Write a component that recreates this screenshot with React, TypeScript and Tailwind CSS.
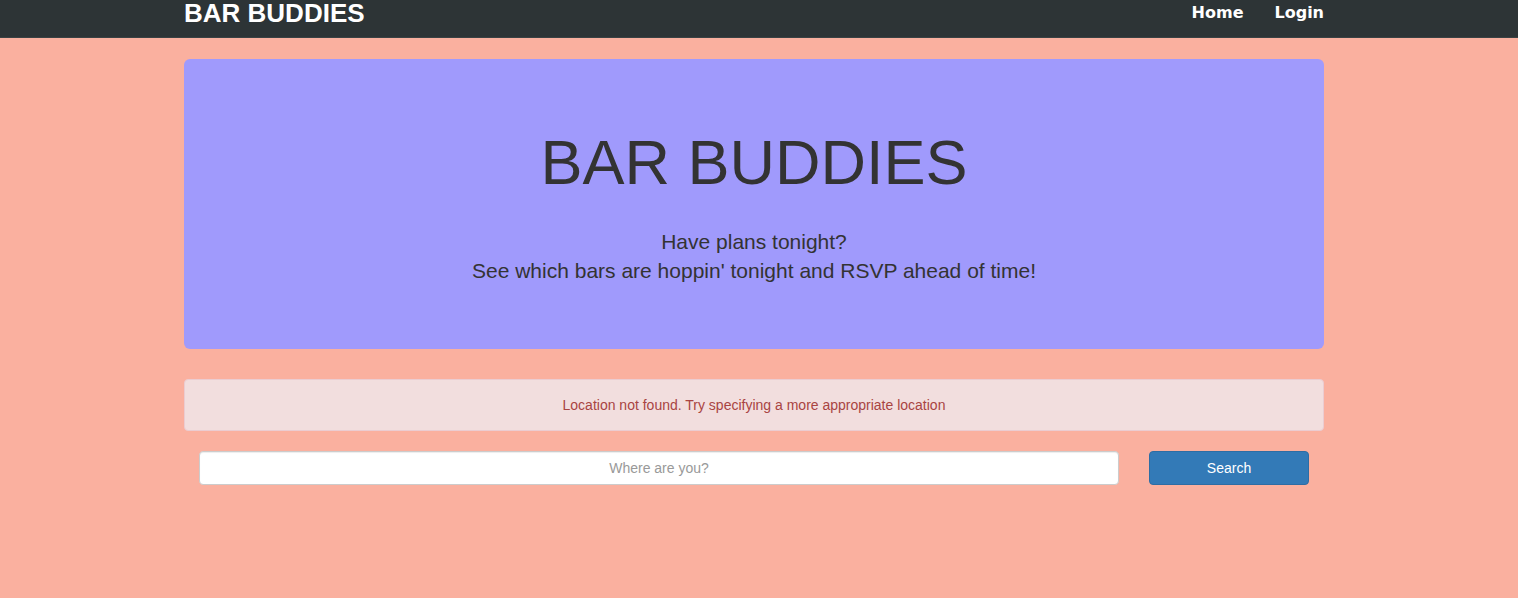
export default function App() {
    return (
        <div className="min-h-[598px] bg-[#fab09f] font-['Liberation_Sans',Arial,sans-serif] text-[14px] text-[#333]">
            {/* Navbar */}
            <nav className="h-[38px] bg-[#2d3436] border-b border-[#3a4244] pr-[10px]">
                <div className="w-[1140px] mx-auto flex items-center justify-between h-full">
                    <span className="text-[26px] font-bold text-white leading-none -mt-[12px]">BAR BUDDIES</span>
                    <div className="flex gap-[31px] -mt-[12px] font-['DejaVu_Sans',sans-serif] font-bold text-[16px] text-white">
                        <span>Home</span>
                        <span>Login</span>
                    </div>
                </div>
            </nav>

            <div className="pr-[10px]">
                <div className="w-[1140px] mx-auto pt-[21px]">
                    {/* Jumbotron */}
                    <div className="bg-[#a09afc] rounded-[6px] pt-12 pb-[49px] text-center">
                        <h1 className="mt-[21px] text-[63px] leading-[1.1] text-[#333]">BAR BUDDIES</h1>
                        <p className="mt-[30px] mb-[15px] text-[21px] leading-[29px] text-[#333]">
                            Have plans tonight?<br />
                            See which bars are hoppin' tonight and RSVP ahead of time!
                        </p>
                    </div>

                    {/* Alert */}
                    <div className="mt-[30px] bg-[#f2dede] border border-[#ebccd1] rounded-[4px] p-[15px] text-center text-[#a94442] leading-[20px]">
                        Location not found. Try specifying a more appropriate location
                    </div>

                    {/* Search form */}
                    <div className="mt-[20px] px-[15px] flex gap-[30px]">
                        <input
                            placeholder="Where are you?"
                            className="flex-1 h-[34px] bg-white border border-[#ccc] rounded-[4px] px-3 text-center text-[14px] placeholder:text-[#999] shadow-[inset_0_1px_1px_rgba(0,0,0,0.075)] outline-none"
                        />
                        <button className="w-[160px] h-[34px] bg-[#337ab7] border border-[#2e6da4] rounded-[4px] text-white text-[14px]">
                            Search
                        </button>
                    </div>
                </div>
            </div>
        </div>
    );
}
